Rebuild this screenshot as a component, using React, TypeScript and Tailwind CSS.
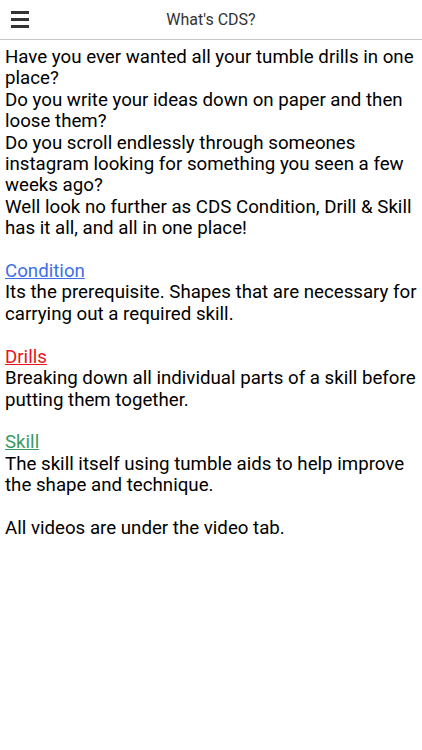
import React from 'react';

export default function App() {
    return (
        <div className="min-h-screen bg-white" style={{ fontFamily: 'Roboto, "Liberation Sans", sans-serif' }}>
            <div className="h-10 flex items-center border-b border-[#c8c8c8] relative">
                <div className="pl-[11px] flex flex-col gap-[4px]">
                    <span className="block w-[18px] h-[3px] bg-[#333]" />
                    <span className="block w-[18px] h-[3px] bg-[#333]" />
                    <span className="block w-[18px] h-[3px] bg-[#333]" />
                </div>
                <h1 className="absolute inset-x-0 text-center text-[16px] text-[#333] pointer-events-none">What's CDS?</h1>
            </div>

            <div className="px-[5px] pt-[7px] text-[18.7px] leading-[21.4px] text-black">
                <p>
                    Have you ever wanted all your tumble drills in one place?<br />
                    Do you write your ideas down on paper and then loose them?<br />
                    Do you scroll endlessly through someones instagram looking for something you seen a few weeks ago?<br />
                    Well look no further as CDS Condition, Drill &amp; Skill has it all, and all in one place!
                </p>
                <br />
                <p>
                    <span className="underline text-[#3f6fe4]">Condition</span><br />
                    Its the prerequisite. Shapes that are necessary for carrying out a required skill.
                </p>
                <br />
                <p>
                    <span className="underline text-[#e8141b]">Drills</span><br />
                    Breaking down all individual parts of a skill before putting them together.
                </p>
                <br />
                <p>
                    <span className="underline text-[#3a9a62]">Skill</span><br />
                    The skill itself using tumble aids to help improve the shape and technique.
                </p>
                <br />
                <p>All videos are under the video tab.</p>
            </div>
        </div>
    );
}
